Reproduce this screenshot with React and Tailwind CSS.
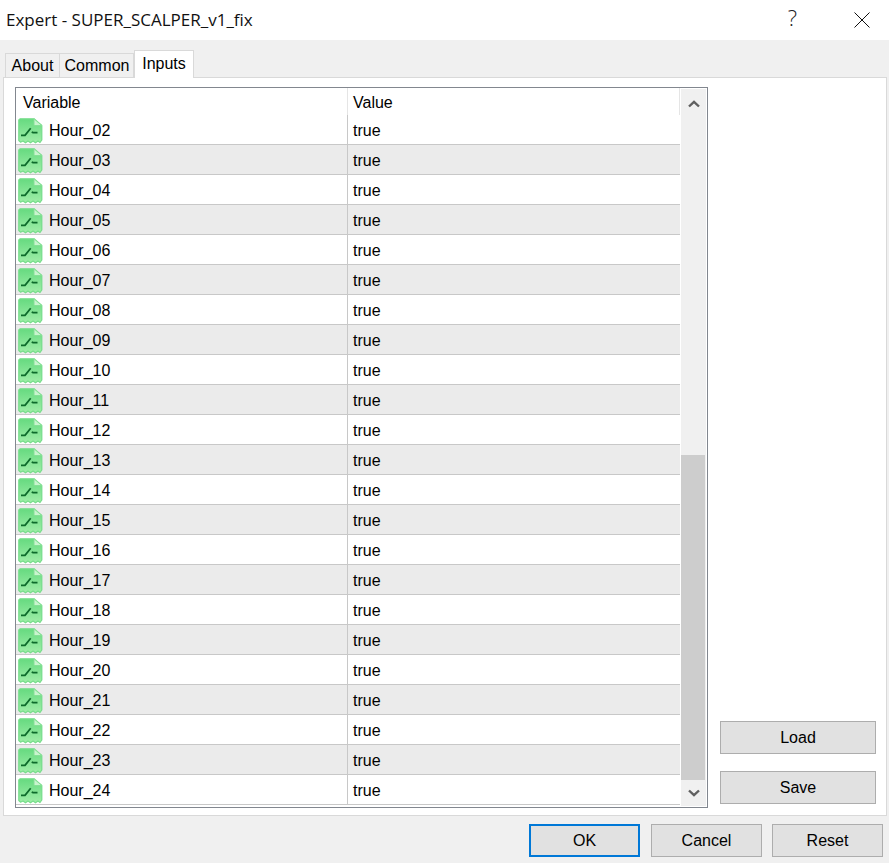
const hours = ["02","03","04","05","06","07","08","09","10","11","12","13","14","15","16","17","18","19","20","21","22","23","24"];

function Icon() {
  return (
    <svg width="26" height="26" viewBox="0 0 26 26" className="shrink-0">
      <defs>
        <linearGradient id="g" x1="0" y1="0" x2="0" y2="1">
          <stop offset="0" stopColor="#66da80" />
          <stop offset="1" stopColor="#a0eea8" />
        </linearGradient>
      </defs>
      <path d="M2 0.8H16L23.8 7.5V22L22 24.5L20 23L17.5 24.8L15 23L12.5 24.8L10 23L7.5 24.8L5 23L2.5 24.2L0.8 22.5V2Z" fill="url(#g)" stroke="#76dd8a" strokeWidth="1.2" strokeLinejoin="round" />
      <path d="M16 0.8V7.5H23.8Z" fill="#c9f4ce" stroke="#84e095" strokeWidth="1" strokeLinejoin="round" />
      <path d="M3 17.3H7L12.7 10.3" fill="none" stroke="#0d6a2b" strokeWidth="1.8" />
      <path d="M13.7 14L15 14.6H19.5" fill="none" stroke="#0d6a2b" strokeWidth="1.8" />
    </svg>
  );
}

function Btn({ children, className = "" }) {
  return (
    <div className={`h-[33px] flex items-center justify-center bg-[#e1e1e1] border border-[#adadad] text-[16px] text-black ${className}`}>
      {children}
    </div>
  );
}

export default function App() {
  return (
    <div className="w-[889px] h-[863px] flex flex-col bg-[#f0f0f0] overflow-hidden font-['Liberation_Sans',Arial,sans-serif] text-[16px] text-black">
      <div className="h-[40px] bg-white flex items-center justify-between shrink-0">
        <span className="ml-[6px] text-[17px] font-['Open_Sans',sans-serif] text-[#111]">Expert - SUPER_SCALPER_v1_fix</span>
        <div className="flex items-center">
          <span className="text-[22px] pb-[6px] font-light font-['Open_Sans',sans-serif] text-[#222] mr-[57px] ml-[-1px]">?</span>
          <svg width="16" height="16" viewBox="0 0 16 16" className="mr-[19px]">
            <path d="M0.5 0.5L15.5 15.5M15.5 0.5L0.5 15.5" stroke="#111" strokeWidth="1" fill="none" />
          </svg>
        </div>
      </div>
      <div className="flex items-end h-[37px] pl-[5px] shrink-0 relative z-10">
        <div className="h-[24px] w-[55px] flex items-center justify-center bg-[#f0f0f0] border border-b-0 border-[#d9d9d9]">About</div>
        <div className="h-[24px] w-[74px] pl-[1px] flex items-center justify-center bg-[#f0f0f0] border border-l-0 border-b-0 border-[#d9d9d9]">Common</div>
        <div className="h-[28px] w-[60px] pb-[1px] flex items-center justify-center bg-white border border-b-0 border-[#d9d9d9] mb-[-1px]">Inputs</div>
      </div>
      <div className="ml-[3px] mr-[2px] h-[739px] bg-white border border-[#d9d9d9] flex pl-[11px] pt-[9px] shrink-0">
        <div className="w-[693px] h-[721px] border border-[#82878f] flex shrink-0">
          <div className="w-[665px] pr-[1px] flex flex-col shrink-0">
            <div className="h-[27px] flex items-center shrink-0">
              <div className="w-[332px] pl-[7px] pt-[2px] h-full flex items-center border-r border-[#e5e5e5]">Variable</div>
              <div className="pl-[5px] pt-[2px] flex-1 h-full flex items-center border-r border-[#e5e5e5]">Value</div>
            </div>
            {hours.map((h, i) => (
              <div key={h} className={`h-[30px] flex items-stretch shrink-0 border-b border-[#c8c8c8] ${i % 2 ? "bg-[#ebebeb]" : "bg-white"}`}>
                <div className="w-[332px] pl-[2px] pt-[3px] flex items-center gap-[5px] border-r border-[#c8c8c8]">
                  <Icon />
                  <span>{`Hour_${h}`}</span>
                </div>
                <div className="pl-[5px] pt-[3px] flex items-center">true</div>
              </div>
            ))}
          </div>
          <div className="w-[25px] mt-[1px] bg-[#f0f0f0] flex flex-col shrink-0 h-[717px]">
            <div className="h-[30px] flex items-center justify-center shrink-0">
              <svg width="12" height="8" viewBox="0 0 12 8"><path d="M1 6.5L6 1.8L11 6.5" fill="none" stroke="#606060" strokeWidth="2.4" /></svg>
            </div>
            <div className="flex-1" />
            <div className="h-[325px] mr-[1px] bg-[#cdcdcd] shrink-0" />
            <div className="h-[26px] flex items-center justify-center shrink-0">
              <svg width="12" height="8" viewBox="0 0 12 8"><path d="M1 1.5L6 6.2L11 1.5" fill="none" stroke="#606060" strokeWidth="2.4" /></svg>
            </div>
          </div>
        </div>
        <div className="ml-[12px] w-[156px] flex flex-col justify-end gap-[17px] h-[717px] shrink-0">
          <Btn>Load</Btn>
          <Btn>Save</Btn>
        </div>
      </div>
      <div className="flex justify-end pr-[6px] pt-[8px] gap-[10px]">
        <Btn className="w-[111px] border-2 !border-[#0078d7] mr-[1px]">OK</Btn>
        <Btn className="w-[111px]">Cancel</Btn>
        <Btn className="w-[111px]">Reset</Btn>
      </div>
    </div>
  );
}
